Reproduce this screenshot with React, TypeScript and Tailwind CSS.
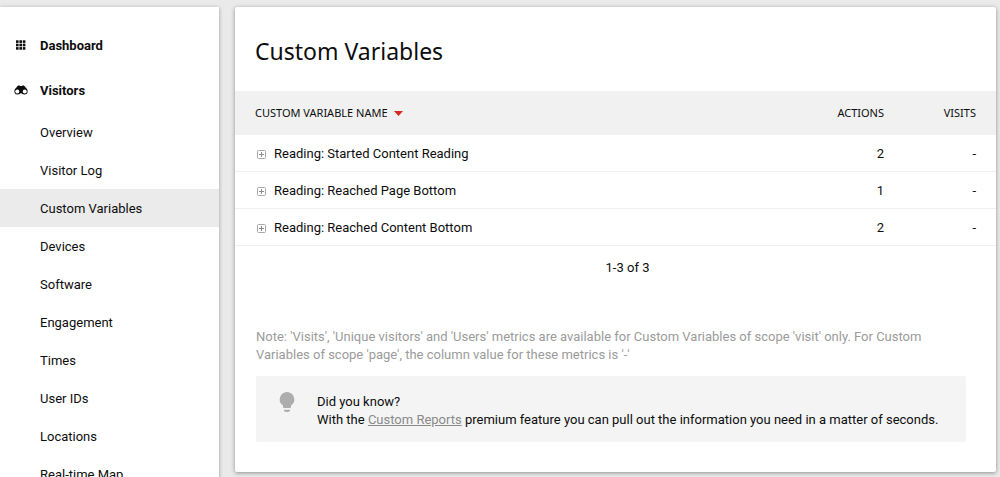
const visitorPages = [
  'Overview',
  'Visitor Log',
  'Custom Variables',
  'Devices',
  'Software',
  'Engagement',
  'Times',
  'User IDs',
  'Locations',
  'Real-time Map',
];

const rows = [
  { name: 'Reading: Started Content Reading', actions: '2', visits: '-' },
  { name: 'Reading: Reached Page Bottom', actions: '1', visits: '-' },
  { name: 'Reading: Reached Content Bottom', actions: '2', visits: '-' },
];

function GridIcon() {
  return (
    <svg viewBox="0 0 14 14" className="size-3.5" fill="#0d0d0d" aria-hidden="true">
      {[2, 5.4, 8.8].map((y) => [2, 5.4, 8.8].map((x) => <rect key={`${x}-${y}`} x={x} y={y - 0.7} width="2.6" height="2.6" />))}
    </svg>
  );
}

function BinocularsIcon() {
  return (
    <svg viewBox="0 0 14 14" className="size-3.5" aria-hidden="true">
      <path
        d="M3 2.4 4.8 1.2l1.4.9h1.6L9.2 1.2 11 2.4l2 3.3-4.2 3.6H5.2L1 5.7z"
        fill="#0d0d0d"
      />
      <circle cx="3.6" cy="7.2" r="3.2" fill="#0d0d0d" />
      <circle cx="10.4" cy="7.2" r="3.2" fill="#0d0d0d" />
      <circle cx="3.3" cy="7.5" r="2" fill="#fff" />
      <circle cx="10.7" cy="7.5" r="2" fill="#fff" />
    </svg>
  );
}

function PlusBox() {
  return (
    <svg viewBox="0 0 9 9" className="size-[9px]" fill="none" aria-hidden="true">
      <rect x=".5" y=".5" width="8" height="8" rx="1" stroke="#a8a8a8" />
      <path d="M2 4.5h5M4.5 2v5" stroke="#8c8c8c" />
    </svg>
  );
}

function Bulb() {
  return (
    <svg viewBox="0 0 16 20" className="mt-4 h-5 w-4 shrink-0" fill="#adadad" aria-hidden="true">
      <path d="M8 0a7.4 7.4 0 0 0-4 13.5V15q0 1 1 1h6q1 0 1-1v-1.5A7.4 7.4 0 0 0 8 0z" />
      <path d="M5 17.8h6v.4q0 1.8-2 1.8H7q-2 0-2-1.8z" />
    </svg>
  );
}

export default function App() {
  return (
    <div className="flex h-screen items-start gap-4 overflow-hidden bg-[#eaeaea] pt-[7px] pr-1 font-[Roboto,sans-serif] text-[13px] leading-[18px] text-[#0d0d0d]">
      <nav className="w-[219px] shrink-0 bg-white pt-4 shadow-[0_1px_4px_rgba(0,0,0,0.35)]">
        <a href="#dashboard" className="flex h-[45px] items-center gap-3 pl-3.5 font-bold">
          <GridIcon />
          Dashboard
        </a>
        <a href="#visitors" className="flex h-[45px] items-center gap-3 pl-3.5 font-bold">
          <BinocularsIcon />
          Visitors
        </a>
        <ul>
          {visitorPages.map((page) => (
            <li key={page}>
              <a
                href="#page"
                className={`flex h-[38px] items-center pt-0.5 pl-10 ${page === 'Custom Variables' ? 'bg-[#ebebeb]' : ''}`}
              >
                {page}
              </a>
            </li>
          ))}
        </ul>
      </nav>

      <main className="min-w-0 flex-1 rounded-xs bg-white pb-[30px] shadow-[0_1px_4px_rgba(0,0,0,0.4)]">
        <h1 className="px-5 pt-7 pb-6 font-['Noto_Sans',sans-serif] text-[23px] leading-8">Custom Variables</h1>
        <table className="w-full border-separate border-spacing-0">
          <thead>
            <tr className="h-11 bg-[#f1f1f1] font-['Noto_Sans',sans-serif] text-[11px] uppercase">
              <th className="pl-5 text-left font-normal">
                <button className="flex items-center gap-1.5 uppercase">
                  Custom Variable Name
                  <svg viewBox="0 0 9 5" className="h-[5px] w-[9px]" fill="#d4291f" aria-hidden="true">
                    <path d="M0 0h9L4.5 5z" />
                  </svg>
                </button>
              </th>
              <th className="w-[89px] pr-3 text-right font-normal">Actions</th>
              <th className="w-[100px] pr-5 text-right font-normal">Visits</th>
            </tr>
          </thead>
          <tbody>
            {rows.map((row) => (
              <tr key={row.name} className="h-[37px]">
                <td className="border-b border-[#efefef] pt-0.5 pl-[22px]">
                  <div className="flex items-center gap-2">
                    <PlusBox />
                    {row.name}
                  </div>
                </td>
                <td className="border-b border-[#efefef] pt-0.5 pr-3 text-right">{row.actions}</td>
                <td className="border-b border-[#efefef] pt-0.5 pr-5 text-right">{row.visits}</td>
              </tr>
            ))}
          </tbody>
        </table>
        <p className="pt-[13px] pl-6 text-center">1-3 of 3</p>
        <div className="pt-[51px] pr-[30px] pl-[21px]">
          <p className="text-[#9b9b9b]">
            Note: 'Visits', 'Unique visitors' and 'Users' metrics are available for Custom Variables of scope 'visit'
            only. For Custom Variables of scope 'page', the column value for these metrics is '-'
          </p>
          <div className="mt-3 flex gap-[22px] rounded-xs bg-[#f4f4f4] px-[23px]">
            <Bulb />
            <p className="pt-[17px] pb-[13px]">
              Did you know?
              <br />
              With the{' '}
              <a href="#reports" className="text-[#8a8a8a] underline">
                Custom Reports
              </a>{' '}
              premium feature you can pull out the information you need in a matter of seconds.
            </p>
          </div>
        </div>
      </main>
    </div>
  );
}
